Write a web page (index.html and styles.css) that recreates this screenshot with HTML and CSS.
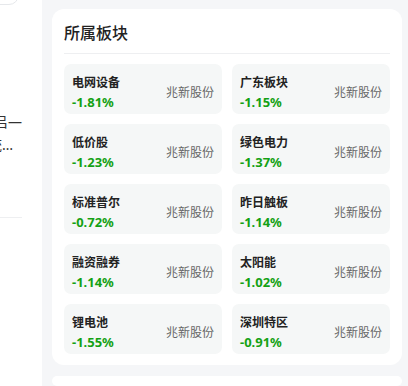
FILE: index.html
```html
<!DOCTYPE html>
<html>
<head>
<meta charset="UTF-8">
<title>所属板块</title>
<link rel="stylesheet" href="styles.css">
</head>
<body>
<div class="page">
	<div class="side">
		<div class="side-box"></div>
		<div class="news">
			<div class="news-item">
				<div class="news-line">兆新股份关于公司控股股东签署协议吕—</div>
				<div class="news-line news-line-2">关于重大事项进展及系统…</div>
			</div>
		</div>
	</div>
	<div class="main">
		<div class="card">
			<div class="card-title">所属板块</div>
			<div class="plates">
				<div class="plate">
					<div class="plate-info"><div class="plate-name">电网设备</div><div class="plate-pct">-1.81%</div></div>
					<div class="plate-stock">兆新股份</div>
				</div>
				<div class="plate">
					<div class="plate-info"><div class="plate-name">广东板块</div><div class="plate-pct">-1.15%</div></div>
					<div class="plate-stock">兆新股份</div>
				</div>
				<div class="plate">
					<div class="plate-info"><div class="plate-name">低价股</div><div class="plate-pct">-1.23%</div></div>
					<div class="plate-stock">兆新股份</div>
				</div>
				<div class="plate">
					<div class="plate-info"><div class="plate-name">绿色电力</div><div class="plate-pct">-1.37%</div></div>
					<div class="plate-stock">兆新股份</div>
				</div>
				<div class="plate">
					<div class="plate-info"><div class="plate-name">标准普尔</div><div class="plate-pct">-0.72%</div></div>
					<div class="plate-stock">兆新股份</div>
				</div>
				<div class="plate">
					<div class="plate-info"><div class="plate-name">昨日触板</div><div class="plate-pct">-1.14%</div></div>
					<div class="plate-stock">兆新股份</div>
				</div>
				<div class="plate">
					<div class="plate-info"><div class="plate-name">融资融券</div><div class="plate-pct">-1.14%</div></div>
					<div class="plate-stock">兆新股份</div>
				</div>
				<div class="plate">
					<div class="plate-info"><div class="plate-name">太阳能</div><div class="plate-pct">-1.02%</div></div>
					<div class="plate-stock">兆新股份</div>
				</div>
				<div class="plate">
					<div class="plate-info"><div class="plate-name">锂电池</div><div class="plate-pct">-1.55%</div></div>
					<div class="plate-stock">兆新股份</div>
				</div>
				<div class="plate">
					<div class="plate-info"><div class="plate-name">深圳特区</div><div class="plate-pct">-0.91%</div></div>
					<div class="plate-stock">兆新股份</div>
				</div>
			</div>
		</div>
		<div class="card card-next"></div>
	</div>
</div>
</body>
</html>
```

FILE: styles.css
```css
body {
	margin: 0;
	padding: 0;
	background: #f5f6f8;
	font-family: "Noto Sans", "Noto Sans CJK SC", sans-serif;
	color: #333333;
	overflow: hidden;
}

.page {
	display: flex;
	gap: 10px;
	height: 386px;
}

.side {
	width: 42px;
	flex: none;
	background: #ffffff;
	overflow: hidden;
}

.side-box {
	width: 60px;
	height: 30px;
	margin-top: -27px;
	margin-left: -43px;
	border: 1px solid #e6e8eb;
	border-radius: 10px;
}

.news {
	width: 400px;
	margin-left: -378px;
	padding-top: 105px;
}

.news-item {
	padding-bottom: 61px;
	border-bottom: 1px solid #eeeff1;
}

.news-line {
	white-space: nowrap;
	text-align: right;
	font-size: 14px;
	line-height: 23px;
	color: #333333;
}

.news-line-2 {
	padding-right: 9px;
}

.main {
	flex: 1;
	margin-right: 6px;
	padding-top: 9px;
	display: flex;
	flex-direction: column;
	gap: 11px;
}

.card {
	background: #ffffff;
	border-radius: 12px;
	padding: 12px 12px 11px;
}

.card-title {
	font-size: 16px;
	font-weight: 500;
	line-height: 24px;
	color: #222222;
	padding-bottom: 8px;
	border-bottom: 1px solid #eeeff1;
	margin-bottom: 10px;
}

.plates {
	display: grid;
	grid-template-columns: 1fr 1fr;
	gap: 10px;
}

.plate {
	height: 50px;
	box-sizing: border-box;
	padding: 9px 8px 0;
	background: #f5f7f7;
	border-radius: 7px;
	display: flex;
	justify-content: space-between;
	align-items: flex-start;
}

.plate-name {
	font-size: 12px;
	font-weight: bold;
	line-height: 20px;
	color: #222222;
}

.plate-pct {
	font-size: 13px;
	font-weight: bold;
	line-height: 18px;
	color: #14a114;
}

.plate-stock {
	margin-top: 11px;
	font-size: 12px;
	line-height: 18px;
	color: #666666;
}

.card-next {
	height: 40px;
	padding: 0;
}
```
